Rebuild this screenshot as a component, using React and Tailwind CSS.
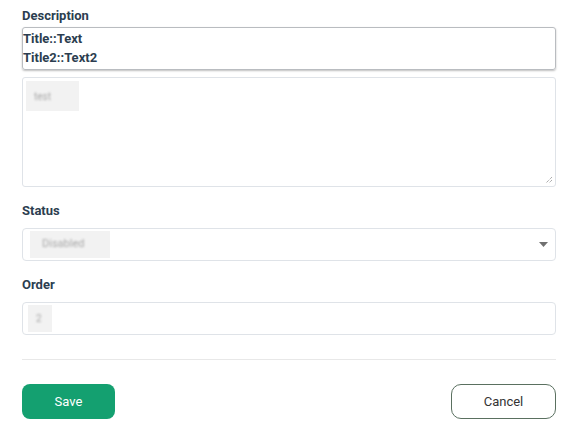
export default function App() {
  return (
    <div className="min-h-screen bg-white font-['Roboto','Liberation_Sans',sans-serif] text-[#2c3e50]">
      <div className="w-[534px] ml-[22px] pt-[8px]">

        {/* Description */}
        <label className="block text-[13px] font-bold leading-[16px]">Description</label>
        <div className="mt-[3px] h-[43px] border border-[#b9bcc0] rounded-[3px] shadow-[0_1px_2px_rgba(0,0,0,0.25)] pt-[1px] text-[13px] font-bold leading-[19px] text-[#2c3e50]">
          <div>Title::Text</div>
          <div>Title2::Text2</div>
        </div>

        <div className="relative mt-[7px] h-[110px] border border-[#dfe3e8] rounded-[3px] p-[3px]">
          <div className="w-[53px] h-[30px] bg-[#f2f2f2] flex items-center pl-[8px]">
            <span className="text-[10px] text-[#a8a8a8] blur-[1.2px]">test</span>
          </div>
          <svg className="absolute right-[2px] bottom-[2px]" width="8" height="8" viewBox="0 0 8 8">
            <path d="M7 1 L1 7 M7 4 L4 7" stroke="#8a8a8a" strokeWidth="1" strokeDasharray="1 1" />
          </svg>
        </div>

        {/* Status */}
        <label className="block mt-[16px] text-[13px] font-bold leading-[16px]">Status</label>
        <div className="mt-[9px] h-[33px] border border-[#dfe3e8] rounded-[4px] flex items-center justify-between pl-[7px] pr-[7px]">
          <div className="w-[80px] h-[27px] bg-[#f2f2f2] flex items-center pl-[12px]">
            <span className="text-[11px] text-[#a8a8a8] blur-[1.2px]">Disabled</span>
          </div>
          <svg width="9" height="5" viewBox="0 0 9 5">
            <path d="M0 0 L9 0 L4.5 5 Z" fill="#707070" />
          </svg>
        </div>

        {/* Order */}
        <label className="block mt-[16px] text-[13px] font-bold leading-[16px]">Order</label>
        <div className="mt-[9px] h-[33px] border border-[#dfe3e8] rounded-[4px] flex items-center pl-[5px]">
          <div className="w-[24px] h-[27px] bg-[#f2f2f2] flex items-center pl-[8px]">
            <span className="text-[10px] text-[#a8a8a8] blur-[1.2px]">2</span>
          </div>
        </div>

        <div className="mt-[24px] border-t border-[#e8e8e8]" />

        <div className="mt-[24px] flex justify-between">
          <button className="w-[93px] h-[35px] rounded-[8px] bg-[#14a070] text-white text-[13px]">Save</button>
          <button className="w-[105px] h-[35px] rounded-[10px] border border-[#5a7060] bg-white text-[#333] text-[13px]">Cancel</button>
        </div>
      </div>
    </div>
  );
}
